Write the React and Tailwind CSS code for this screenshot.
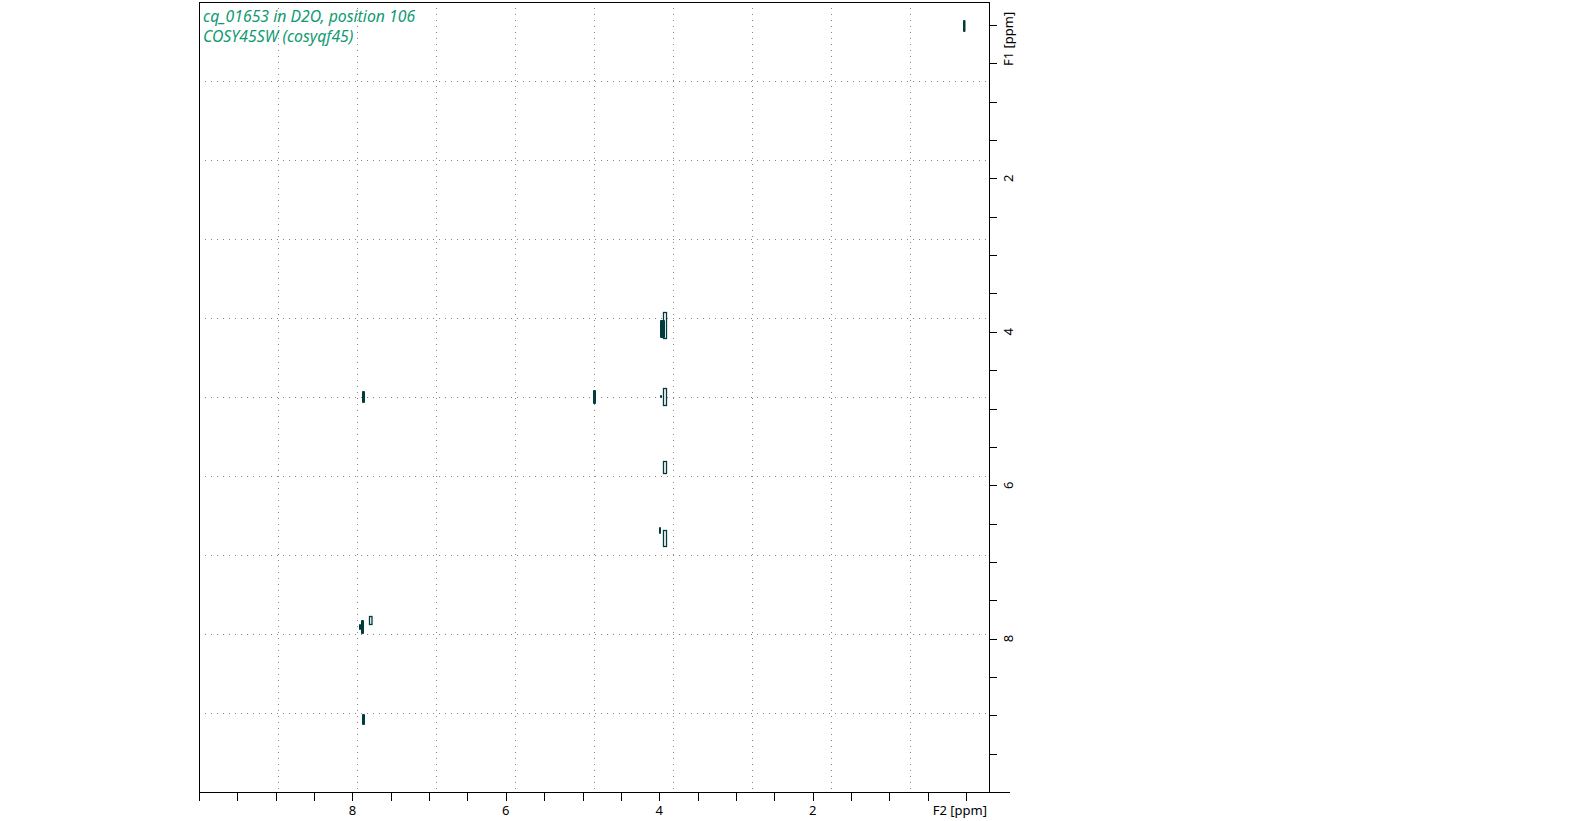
export default function App() {
  const L = 199, R = 989, T = 2, B = 792;
  const xp = (p) => 966 - p * 76.7;
  const yp = (p) => 25 + p * 76.7;
  const gx = [278, 357, 436, 515, 594, 673, 752, 831, 910];
  const gy = [81, 160, 239, 318, 397, 476, 555, 634, 713];
  const xt = []; for (let p = 0; p <= 20; p++) xt.push(p / 2);
  const yt = []; for (let p = 0; p <= 19; p++) yt.push(p / 2);
  const c = "#023b3b";
  const fill = [
    [963, 20, 2.5, 12], [362, 391, 3, 12], [593, 390, 3, 14],
    [660, 320, 5, 18], [660, 395, 2, 3], [659, 527, 2, 7],
    [361, 620, 3, 14], [359, 624, 2, 6], [362, 714, 3, 11],
  ];
  const out = [
    [663, 312, 3, 26], [663, 388, 3, 17], [663, 461, 3, 12], [663, 530, 3, 16], [369, 616, 2.5, 8],
  ];
  return (
    <div className="w-[1584px] h-[821px] bg-white overflow-hidden font-['DejaVu_Sans',sans-serif]">
      <svg width="1584" height="821">
        {gx.map((x) => <line key={"gx" + x} x1={x + 0.5} y1={T} x2={x + 0.5} y2={B} stroke="#888" strokeWidth="1" strokeDasharray="1 5" />)}
        {gy.map((y) => <line key={"gy" + y} x1={L} y1={y + 0.5} x2={R} y2={y + 0.5} stroke="#888" strokeWidth="1" strokeDasharray="1 5" />)}
        <rect x={L + 0.5} y={T + 0.5} width={R - L} height={B - T} fill="none" stroke="#000" strokeWidth="1" />
        <line x1={L} y1={B + 0.5} x2={1010} y2={B + 0.5} stroke="#000" />
        {xt.map((p) => <line key={"xt" + p} x1={Math.round(xp(p)) + 0.5} y1={B} x2={Math.round(xp(p)) + 0.5} y2={B + 9} stroke="#000" />)}
        {yt.map((p) => <line key={"yt" + p} x1={R} y1={Math.round(yp(p)) + 0.5} x2={R + 8} y2={Math.round(yp(p)) + 0.5} stroke="#000" />)}
        {[8, 6, 4, 2].map((p) => <text key={"xl" + p} x={xp(p)} y={815} fontSize="13" textAnchor="middle" fill="#000">{p}</text>)}
        <text x={987} y={815} fontSize="13" textAnchor="end" fill="#000">F2 [ppm]</text>
        {[2, 4, 6, 8].map((p) => <text key={"yl" + p} transform={`translate(1013 ${yp(p)}) rotate(-90)`} fontSize="13" textAnchor="middle" fill="#000">{p}</text>)}
        <text transform="translate(1013 66) rotate(-90)" fontSize="13" textAnchor="start" fill="#000">F1 [ppm]</text>
        <text x="203" y="22" fontSize="15.8" fontStyle="italic" fill="#109a72">cq_01653 in D2O, position 106</text>
        <text x="203" y="42" fontSize="15.8" fontStyle="italic" fill="#109a72">COSY45SW (cosyqf45)</text>
        {fill.map(([x, y, w, h], i) => <rect key={"f" + i} x={x} y={y} width={w} height={h} rx="1" fill={c} />)}
        {out.map(([x, y, w, h], i) => <rect key={"o" + i} x={x + 0.5} y={y + 0.5} width={w} height={h} fill="none" stroke={c} strokeWidth="1.3" />)}
      </svg>
    </div>
  );
}
